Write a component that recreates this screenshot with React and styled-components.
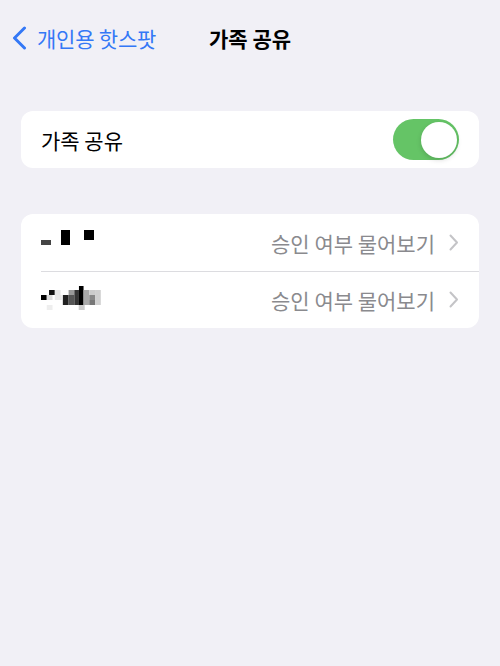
import React from 'react';
import styled, { createGlobalStyle } from 'styled-components';

const GlobalStyle = createGlobalStyle`
  html, body {
    margin: 0;
    padding: 0;
    background: #f1f0f6;
  }
  body {
    font-family: "Noto Sans CJK KR", "Noto Sans", sans-serif;
    -webkit-font-smoothing: antialiased;
  }
`;

const Page = styled.div`
  min-height: 666px;
  background: #f1f0f6;
  padding: 0 21px;
  box-sizing: border-box;
`;

const NavBar = styled.div`
  display: grid;
  grid-template-columns: 1fr auto 1fr;
  align-items: center;
  height: 75px;
  margin: 0 -21px;
  padding: 0 12px;
`;

const BackButton = styled.div`
  display: flex;
  align-items: center;
  gap: 10px;
  color: #3478f6;
  font-size: 21px;
  letter-spacing: -0.2px;
  svg { display: block; }
`;

const Title = styled.div`
  font-size: 21px;
  font-weight: 600;
  color: #000;
`;

const Card = styled.div`
  background: #fff;
  border-radius: 12px;
  overflow: hidden;
  margin-top: ${p => p.$top}px;
`;

const Row = styled.div`
  display: flex;
  align-items: center;
  height: 57px;
  padding: 0 20px;
  position: relative;
  & + &::before {
    content: '';
    position: absolute;
    top: 0;
    left: 20px;
    right: 0;
    border-top: 1px solid #dcdce0;
  }
`;

const Label = styled.div`
  flex: 1;
  font-size: 21px;
  color: #000;
`;

const Detail = styled.div`
  margin-left: auto;
  font-size: 21px;
  color: #8a8a8e;
  display: flex;
  align-items: center;
  gap: 14px;
`;

const Toggle = styled.div`
  width: 66px;
  height: 41px;
  border-radius: 21px;
  background: ${p => (p.$on ? '#65c466' : '#e9e9eb')};
  display: flex;
  align-items: center;
  justify-content: ${p => (p.$on ? 'flex-end' : 'flex-start')};
  padding: 0 2px;
  box-sizing: border-box;
`;

const Knob = styled.div`
  width: 36px;
  height: 36px;
  border-radius: 50%;
  background: #fff;
  box-shadow: 0 2px 5px rgba(0, 0, 0, 0.15);
`;

const Chevron = () => (
  <svg width="10" height="17" viewBox="0 0 10 17">
    <path d="M1.5 1.5 L8 8.5 L1.5 15.5" fill="none" stroke="#c4c4c7" strokeWidth="2" strokeLinecap="round" strokeLinejoin="round" />
  </svg>
);

const BackChevron = () => (
  <svg width="15" height="24" viewBox="0 0 15 24">
    <path d="M12.5 2 L2.5 12 L12.5 22" fill="none" stroke="#3478f6" strokeWidth="3" strokeLinecap="round" strokeLinejoin="round" />
  </svg>
);

// redacted names, drawn as the mosaic blocks in the screenshot
const mosaicA = [
  [0, 11, 10, 5, '#444'],
  [20, 1, 9, 15, '#000'],
  [43, 1, 10, 10, '#000'],
];

const mosaicB = [
  [7, 4, 5, 5, '#111'],
  [12, 4, 5, 5, '#e6e6e6'],
  [0, 9, 5, 5, '#000'],
  [5, 9, 5, 5, '#ddd'],
  [12, 9, 6, 5, '#e8e8e8'],
  [19, 9, 5, 10, '#222'],
  [24, 4, 5, 5, '#999'],
  [24, 9, 5, 10, '#555'],
  [29, 4, 4, 15, '#333'],
  [33, 0, 4, 24, '#000'],
  [37, 4, 5, 15, '#aaa'],
  [42, 4, 5, 5, '#ccc'],
  [42, 9, 5, 5, '#888'],
  [42, 14, 5, 5, '#777'],
  [47, 4, 5, 15, '#d0d0d0'],
  [5, 19, 5, 5, '#eee'],
  [33, 19, 5, 5, '#ccc'],
];

const Mosaic = ({ cells, w, h, scale = 1 }) => (
  <svg width={w * scale} height={h} viewBox={`0 0 ${w} ${h}`} preserveAspectRatio="none">
    {cells.map(([x, y, cw, ch, c], i) => (
      <rect key={i} x={x} y={y} width={cw} height={ch} fill={c} />
    ))}
  </svg>
);

const Name = styled.div`
  display: flex;
  align-items: center;
  margin-top: ${p => p.$offset || 0}px;
  svg { display: block; }
`;

export default function App() {
  return (
    <>
      <GlobalStyle />
      <Page>
        <NavBar>
          <BackButton>
            <BackChevron />
            <span>개인용 핫스팟</span>
          </BackButton>
          <Title>가족 공유</Title>
          <div />
        </NavBar>

        <Card $top={36}>
          <Row>
            <Label>가족 공유</Label>
            <Toggle $on>
              <Knob />
            </Toggle>
          </Row>
        </Card>

        <Card $top={46}>
          <Row>
            <Name $offset={-10}>
              <Mosaic cells={mosaicA} w={54} h={17} />
            </Name>
            <Detail>
              승인 여부 물어보기
              <Chevron />
            </Detail>
          </Row>
          <Row>
            <Name $offset={-2}>
              <Mosaic cells={mosaicB} w={52} h={26} scale={1.15} />
            </Name>
            <Detail>
              승인 여부 물어보기
              <Chevron />
            </Detail>
          </Row>
        </Card>
      </Page>
    </>
  );
}
